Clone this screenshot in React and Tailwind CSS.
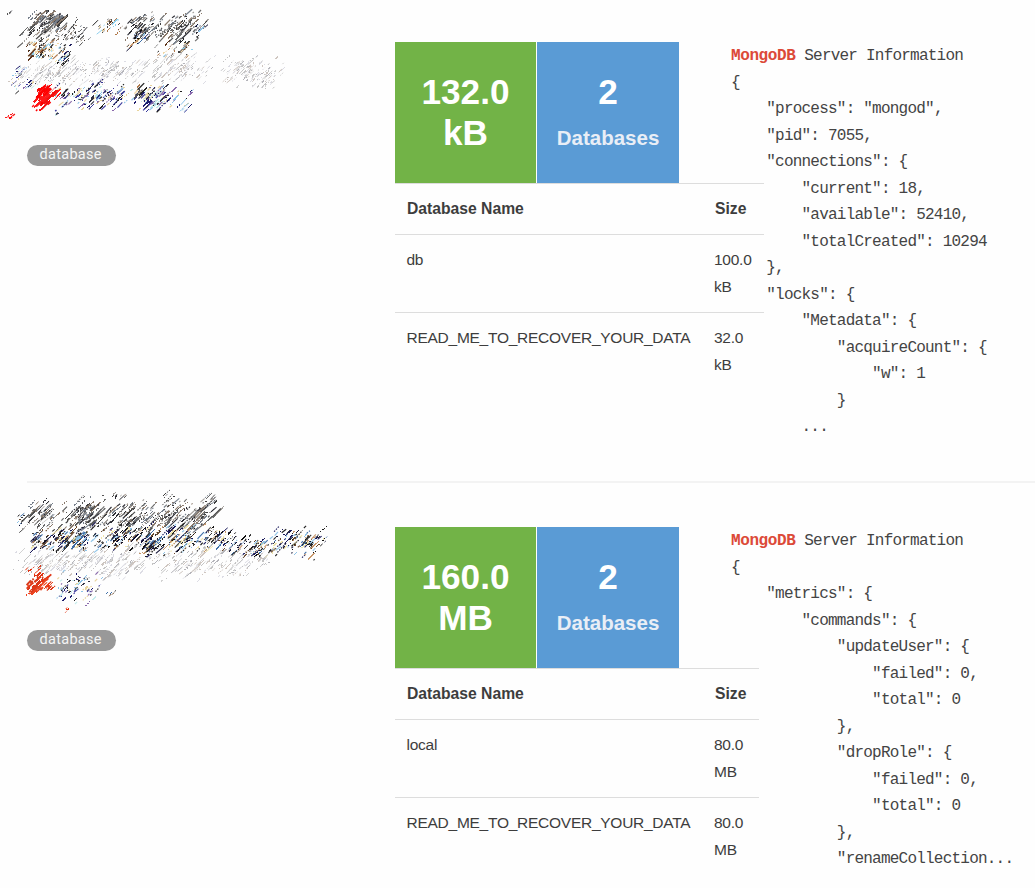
import React from 'react';

// Small seeded generator so the smudges are the same on every render
const makeRandom = (seed) => {
	let s = seed;
	return () => {
		s = (s * 16807) % 2147483647;
		return s / 2147483647;
	};
};

const DARK = ['#3f3f3f', '#555555', '#6b6b6b', '#2d2d35', '#8a7a6c', '#77808c', '#a4a09c'];
const MIXED = ['#1c1c5c', '#222222', '#6b4a2e', '#3f6fa8', '#111133', '#8fc4e8', '#c8986c', '#f0e4a8', '#3a3a3a', '#111111'];
const BROWN = ['#5c3218', '#222222', '#b07a4c', '#8fd0ee', '#4f4f4f', '#f0d8a8'];
const LIGHT = ['#c4c4c4', '#d2d2d2', '#b4b4ba', '#cfc6c0', '#dcdce4'];
const NAVY = ['#1c1c6c', '#3c3c9c', '#333344', '#8fc4e8', '#e8d49c', '#8b6aac', '#222222', '#c4ecec'];
const RED = ['#ff0000', '#f01010', '#ff1a1a'];
const ORANGE = ['#e03414', '#d83a1c', '#ec4420'];

const records = [
	{
		id: 'first',
		total: '132.0 kB',
		tableWidth: 'w-[369px]',
		databases: [
			{ name: 'db', size: '100.0 kB' },
			{ name: 'READ_ME_TO_RECOVER_YOUR_DATA', size: '32.0 kB' },
		],
		info: `{
    "process": "mongod",
    "pid": 7055,
    "connections": {
        "current": 18,
        "available": 52410,
        "totalCreated": 10294
    },
    "locks": {
        "Metadata": {
            "acquireCount": {
                "w": 1
            }
        ...`,
		// x, y, width, height, number of strokes, colours, longest stroke, stroke width
		smudges: [
			[26, 12, 42, 34, 110, DARK, 9, 1.1],
			[36, 11, 12, 8, 14, DARK, 5, 1.3],
			[50, 12, 14, 14, 20, DARK, 14, 1.6],
			[62, 18, 28, 26, 46, DARK, 6, 1],
			[95, 17, 24, 18, 28, BROWN, 6, 1],
			[124, 12, 32, 30, 80, DARK, 8, 1.1],
			[157, 12, 44, 32, 105, DARK, 10, 1.2],
			[178, 42, 10, 13, 8, DARK, 12, 1.5],
			[196, 22, 11, 14, 9, MIXED, 6, 1],
			[128, 28, 18, 20, 28, MIXED, 6, 1],
			[26, 40, 42, 20, 66, BROWN, 6, 1.1],
			[30, 48, 18, 10, 14, BROWN, 8, 1.5],
			[56, 44, 18, 20, 22, MIXED, 6, 1.2],
			[148, 40, 45, 17, 26, BROWN, 6, 1],
			[6, 11, 9, 5, 4, DARK, 3, 1],
			[16, 62, 70, 24, 100, LIGHT, 7, 1],
			[65, 58, 76, 26, 125, LIGHT, 7, 1],
			[140, 54, 72, 29, 115, LIGHT, 7, 1],
			[222, 58, 60, 24, 90, LIGHT, 6, 1],
			[236, 52, 22, 36, 22, LIGHT, 4, 1],
			[256, 64, 20, 26, 34, LIGHT, 5, 1],
			[13, 63, 10, 30, 18, NAVY, 8, 1],
			[24, 78, 14, 14, 14, NAVY, 4, 1],
			[55, 84, 40, 24, 70, NAVY, 7, 1.1],
			[88, 82, 40, 28, 70, NAVY, 8, 1.1],
			[132, 84, 48, 27, 95, NAVY, 10, 1.2],
			[135, 86, 8, 10, 8, BROWN, 7, 1.3],
			[178, 90, 18, 24, 14, NAVY, 7, 1],
			[55, 110, 5, 5, 4, NAVY, 3, 1.5],
			[38, 86, 12, 8, 12, RED, 15, 1.8],
			[34, 92, 18, 12, 20, RED, 18, 2],
			[30, 98, 20, 12, 14, RED, 14, 1.5],
			[46, 84, 16, 16, 7, RED, 10, 1],
			[8, 112, 7, 7, 9, RED, 4, 1.3],
		],
	},
	{
		id: 'second',
		total: '160.0 MB',
		tableWidth: 'w-[364px]',
		databases: [
			{ name: 'local', size: '80.0 MB' },
			{ name: 'READ_ME_TO_RECOVER_YOUR_DATA', size: '80.0 MB' },
		],
		info: `{
    "metrics": {
        "commands": {
            "updateUser": {
                "failed": 0,
                "total": 0
            },
            "dropRole": {
                "failed": 0,
                "total": 0
            },
            "renameCollection...`,
		smudges: [
			[27, 16, 33, 30, 80, DARK, 9, 1],
			[62, 13, 44, 33, 100, DARK, 11, 1.1],
			[82, 16, 16, 22, 20, DARK, 11, 1.4],
			[100, 15, 52, 32, 110, DARK, 10, 1.1],
			[148, 16, 38, 31, 80, DARK, 10, 1.1],
			[184, 16, 32, 30, 75, DARK, 13, 1.1],
			[112, 7, 14, 7, 10, DARK, 5, 1],
			[164, 6, 10, 12, 8, DARK, 11, 1],
			[206, 8, 10, 14, 12, DARK, 11, 1],
			[17, 29, 7, 12, 8, MIXED, 5, 1],
			[29, 44, 60, 21, 125, MIXED, 9, 1.1],
			[72, 48, 16, 14, 16, MIXED, 12, 1.5],
			[86, 40, 64, 25, 120, MIXED, 7, 1.1],
			[140, 52, 18, 18, 24, MIXED, 10, 1.4],
			[144, 40, 66, 30, 140, MIXED, 8, 1.1],
			[205, 42, 38, 24, 70, MIXED, 8, 1],
			[236, 50, 42, 22, 70, MIXED, 8, 1.1],
			[274, 42, 32, 26, 60, MIXED, 8, 1.1],
			[302, 44, 17, 30, 40, MIXED, 9, 1.1],
			[318, 49, 10, 12, 6, MIXED, 3, 1],
			[18, 61, 76, 29, 115, LIGHT, 8, 1],
			[70, 60, 94, 34, 145, LIGHT, 8, 1],
			[156, 62, 68, 32, 95, LIGHT, 8, 1],
			[218, 64, 38, 34, 55, LIGHT, 9, 1],
			[250, 64, 26, 18, 24, LIGHT, 5, 1],
			[58, 88, 40, 29, 75, NAVY, 6, 1.1],
			[34, 88, 14, 8, 12, ORANGE, 9, 1.6],
			[29, 92, 17, 14, 24, ORANGE, 14, 1.8],
			[25, 98, 16, 13, 14, ORANGE, 12, 1.3],
			[42, 96, 14, 10, 14, ORANGE, 7, 1.1],
			[18, 80, 24, 8, 7, ORANGE, 5, 1],
			[62, 122, 7, 7, 4, ORANGE, 4, 1],
			[100, 104, 16, 10, 5, MIXED, 4, 1],
		],
	},
];

const Smudge = ({ areas }) => {
	const random = makeRandom(4211);
	const strokes = [];
	areas.forEach(([x, y, width, height, count, colors, longest, thickness]) => {
		for (let i = 0; i < count; i++) {
			const length = 1.2 + random() * random() * longest;
			// strokes thin out towards the edges, and the whole area leans to the right
			const u = (random() + random()) / 2;
			const v = (random() + random()) / 2;
			const spreadV = (v - 0.5) * 1.15 + 0.5;
			const centerX = x + ((u - 0.5) * 1.2 + 0.5) * width + (0.5 - spreadV) * height * 0.25;
			const centerY = y + spreadV * height;
			const rise = length * (0.75 + random() * 0.4);
			strokes.push({
				d: `M${(centerX - length / 2).toFixed(1)} ${(centerY + rise / 2).toFixed(1)}l${length.toFixed(1)} ${(-rise).toFixed(1)}`,
				color: colors[Math.floor(random() * colors.length)],
				thickness,
				dash: random() > 0.6 && thickness < 1.5 ? '1.5 1.2' : undefined,
			});
		}
	});

	return (
		<svg className="absolute left-0 top-0" width="340" height="135" viewBox="0 0 340 135" aria-hidden="true">
			{strokes.map((stroke, i) => (
				<path
					key={i}
					d={stroke.d}
					stroke={stroke.color}
					strokeWidth={stroke.thickness}
					strokeDasharray={stroke.dash}
					fill="none"
					shapeRendering={i % 2 ? 'crispEdges' : 'auto'}
				/>
			))}
		</svg>
	);
};

const DatabaseTable = ({ databases, width }) => (
	<table className={`${width} table-fixed border-collapse text-left text-[15.5px] leading-[26.4px] tracking-[-0.26px] text-[#3d3d3d]`}>
		<thead>
			<tr className="border-y border-[#dddddd]">
				<th className="w-[308px] px-3 py-3 text-[15.7px] font-bold tracking-normal">Database Name</th>
				<th className="py-3 pl-3 text-[15.7px] font-bold tracking-normal">Size</th>
			</tr>
		</thead>
		<tbody>
			{databases.map((database) => (
				<tr key={database.name} className="border-b border-[#dddddd] last:border-b-0">
					<td className="py-3 pl-[11.5px] align-top">{database.name}</td>
					<td className="py-3 pl-[11px] align-top">
						<div className="w-10">{database.size}</div>
					</td>
				</tr>
			))}
		</tbody>
	</table>
);

const ServerInfo = ({ info }) => (
	<div className="whitespace-pre pt-px font-['Liberation_Mono',monospace] text-[16px] leading-[26.5px] tracking-[-0.78px] text-[#444444]">
		<div>
			<strong className="tracking-[-0.4px] text-[#dc4a38]">MongoDB</strong> Server Information
		</div>
		{info.split('\n').map((line, i) => {
			const text = line.trimStart();
			return (
				<div key={i} style={{ marginLeft: (line.length - text.length) * 8.82 }}>
					{text}
				</div>
			);
		})}
	</div>
);

const Record = ({ record }) => (
	<section className="relative flex h-[485px] pt-[42px]">
		<Smudge areas={record.smudges} />
		<div className="w-[395px] shrink-0 pl-[27px] pt-[103px]">
			<span className="flex h-[21px] w-[89px] items-center rounded-full bg-[#999999] pl-[12.5px] font-['Roboto',sans-serif] text-[14.5px] leading-none tracking-[0.3px] text-[#f4f4f4]">
				database
			</span>
		</div>
		<div className="w-[336px] shrink-0">
			<div className="flex h-[141px] gap-px text-center font-bold text-white">
				<div className="w-[141px] bg-[#72b347] px-5 pt-[29px] text-[35.2px] leading-[41px]">{record.total}</div>
				<div className="w-[142px] bg-[#5a9bd5] pt-[29px]">
					<div className="text-[35.2px] leading-[41px]">2</div>
					<div className="mt-3 text-[20.5px] leading-7 text-[#e9eef6]">Databases</div>
				</div>
			</div>
			<DatabaseTable databases={record.databases} width={record.tableWidth} />
		</div>
		<ServerInfo info={record.info} />
	</section>
);

const App = () => {
	return (
		<div className="h-[888px] w-[1035px] overflow-hidden bg-[#fefefe] font-['Liberation_Sans',Arial,sans-serif]">
			{records.map((record, i) => (
				<React.Fragment key={record.id}>
					{i > 0 && <hr className="-mt-1 mb-0.5 ml-[27px] border-t-2 border-[#f3f3f3]" />}
					<Record record={record} />
				</React.Fragment>
			))}
		</div>
	);
};

export default App;
